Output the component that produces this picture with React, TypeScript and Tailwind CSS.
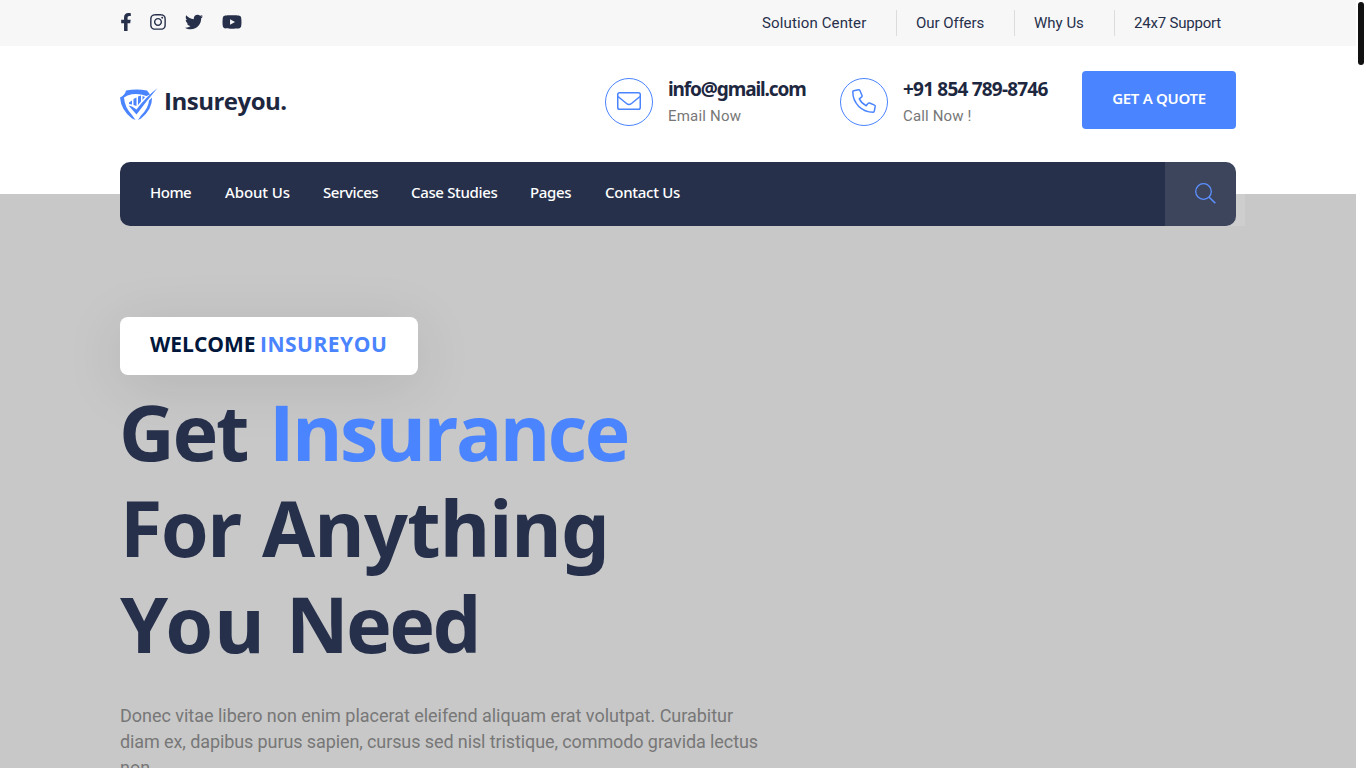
import { FaFacebookF, FaInstagram, FaTwitter, FaYoutube } from "react-icons/fa";

const topLinks = [
  { label: "Solution Center", className: "w-[134px] tracking-[0.13px]" },
  { label: "Our Offers", className: "w-[118px] tracking-[-0.05px]" },
  { label: "Why Us", className: "w-[100px]" },
  { label: "24x7 Support", className: "w-[107px] tracking-[-0.2px]" },
];

const navLinks = [
  { label: "Home", className: "w-[75px] tracking-[-0.5px]" },
  { label: "About Us", className: "w-[98px] tracking-[-0.1px]" },
  { label: "Services", className: "w-[88px] tracking-[-0.4px]" },
  { label: "Case Studies", className: "w-[119px] tracking-[-0.35px]" },
  { label: "Pages", className: "w-[75px] tracking-[-0.35px]" },
  { label: "Contact Us", className: "tracking-[-0.27px]" },
];

function Logo() {
  return (
    <div className="flex h-[34px] w-[170px] items-center">
      <svg viewBox="0 0 38 34" className="h-[34px] w-[38px] shrink-0" fill="#4a84ff">
        <path d="M6 2.500Q16.500.500 27 2.500L30 6.500L26.500 8Q16.500 4.500 7.500 7.500L4 9.500Q4.500 19 12 27L15.500 32L12 30.500Q1 22 0 9.500Q5 7 6 2.500Z" />
        <path d="M37.500 0Q26.500 13 16.500 26.500L8.500 17.500L12 18.500L16.500 21.500Q25 10 37.500 0Z" />
        <path d="M32 9.500Q32.500 21 21 30.500L18 32L21 27.500Q28.500 20 29 12.500Z" />
        <path d="M9 14.500L12 12.500V16.500L9 16ZM13.500 11L16.500 9.500V18L13.500 17ZM18 8.500L21 7.500V13.500L18 17ZM22.500 8L25 9L22.500 12Z" />
      </svg>
      <span className="mb-[8px] ml-[6px] whitespace-nowrap font-['Open_Sans'] text-[24px] font-bold leading-none tracking-[-0.5px] text-[#1d2740]">
        Insureyou.
      </span>
    </div>
  );
}

function MailIcon() {
  return (
    <svg viewBox="0 0 24 18" className="mb-[2px] h-[18px] w-6" fill="none" stroke="#4a84ff" strokeWidth="1.5">
      <rect x=".75" y=".75" width="22.500" height="16.500" rx="1.800" />
      <path d="M1 4.500L9.500 11.500Q12 13.500 14.500 11.500L23 4.500" />
    </svg>
  );
}

function PhoneIcon() {
  return (
    <svg
      viewBox="0 0 24 24"
      className="mb-[2px] size-6"
      fill="none"
      stroke="#4a84ff"
      strokeWidth="1.5"
      strokeLinejoin="round"
    >
      <path d="M1.700 1.700L6.600.8Q7.500.7 7.900 1.500L10 6.500Q10.300 7.300 9.700 7.900L7.300 9.900Q9.700 14.600 14.200 16.700L16.200 14.300Q16.800 13.700 17.600 14L22.500 16.100Q23.300 16.500 23.200 17.400L22.300 22.200Q22.100 23.200 21.200 23.200C9.500 23.200.8 14 .8 2.800Q.8 1.900 1.700 1.700Z" />
    </svg>
  );
}

function SearchIcon() {
  return (
    <svg viewBox="0 0 21 21" className="size-[21px]" fill="none" stroke="#4a84ff" strokeWidth="1.300">
      <circle cx="8.500" cy="8.500" r="7.800" />
      <path d="M14 14L20.300 20.300" strokeWidth="1.600" />
    </svg>
  );
}

export default function App() {
  return (
    <div className="relative flex h-[768px] w-[1366px] overflow-hidden bg-white font-[Roboto,sans-serif]">
      <div className="w-[1356px] shrink-0">
        {/* Top bar */}
        <div className="flex h-[46px] justify-between bg-[#f7f7f7] pl-[120px] pr-[135px] text-[#27304b]">
          <div className="flex items-center pb-[2px]">
            <FaFacebookF className="mr-[18px] h-[18px] w-3" />
            <FaInstagram className="mr-[18px] size-[18px] -ml-px" />
            <FaTwitter className="mr-[19px] size-[18px]" />
            <FaYoutube className="h-[18px] w-5" />
          </div>
          <ul className="flex items-center text-[15px]">
            {topLinks.map((link, i) => (
              <li key={link.label} className={`flex shrink-0 items-center whitespace-nowrap ${link.className}`}>
                {i > 0 && <span className="mr-[19px] h-[26px] w-px shrink-0 bg-[#dcdcdc]" />}
                {link.label}
              </li>
            ))}
          </ul>
        </div>

        {/* Header */}
        <header className="flex h-[116px] items-start px-[120px] pt-[25px]">
          <div className="pt-[17px]">
            <Logo />
          </div>
          <div className="ml-auto flex">
            <div className="mt-[7px] flex w-[235px]">
              <div className="mr-[15px] flex size-12 shrink-0 items-center justify-center rounded-full border border-[#4a84ff]">
                <MailIcon />
              </div>
              <div className="whitespace-nowrap">
                <p className="font-['Noto_Sans'] text-[19px] font-bold leading-[22px] tracking-[-1.1px] text-[#1d2740]">
                  info@gmail.com
                </p>
                <p className="mt-[5px] text-[15px] leading-[22px] tracking-[0.2px] text-[#777]">Email Now</p>
              </div>
            </div>
            <div className="mt-[7px] flex w-[242px]">
              <div className="mr-[15px] flex size-12 shrink-0 items-center justify-center rounded-full border border-[#4a84ff]">
                <PhoneIcon />
              </div>
              <div className="whitespace-nowrap">
                <p className="font-['Noto_Sans'] text-[19px] font-bold leading-[22px] tracking-[-0.8px] text-[#1d2740]">
                  +91 854 789-8746
                </p>
                <p className="mt-[5px] text-[15px] leading-[22px] tracking-[0.15px] text-[#777]">Call Now !</p>
              </div>
            </div>
            <button className="flex h-[58px] w-[154px] items-center justify-center whitespace-nowrap rounded bg-[#4a84ff] pb-[3px] font-['Noto_Sans'] text-[15px] font-semibold tracking-[-0.3px] text-white">
              GET A QUOTE
            </button>
          </div>
        </header>

        {/* Nav overlaps the hero */}
        <nav className="relative z-10 mx-[120px] flex h-16 items-center justify-between rounded-[10px] bg-[#27304b] pl-[30px]">
          <ul className="mb-[4px] flex whitespace-nowrap font-['Noto_Sans'] text-[15px] font-medium leading-[22px] text-white">
            {navLinks.map((link) => (
              <li key={link.label} className={link.className}>
                {link.label}
              </li>
            ))}
          </ul>
          <div className="absolute right-[-9px] top-0 h-16 w-20 bg-white/10" />
          <div className="mb-px mr-[20px]">
            <SearchIcon />
          </div>
        </nav>

        {/* Hero */}
        <section className="-mt-8 h-[574px] bg-[#c8c8c8] px-[120px] pt-[123px]">
          <div className="flex h-[58px] w-[298px] items-center whitespace-nowrap rounded-lg bg-white pb-[2px] pl-[30px] font-['Open_Sans'] text-[21px] font-bold text-[#00173c] shadow-[0_10px_60px_rgba(0,0,0,0.1)]">
            <span className="w-[110px]">WELCOME</span>
            <span className="tracking-[0.5px] text-[#4a84ff]">INSUREYOU</span>
          </div>
          <h1 className="mt-[9px] whitespace-nowrap font-['Noto_Sans'] text-[77px] font-bold leading-[96px] text-[#27304b]">
            <span className="flex">
              <span className="-ml-px w-[150px] tracking-[-2.3px]">Get</span>
              <span className="font-['Open_Sans'] tracking-[-2.6px] text-[#4a84ff]">Insurance</span>
            </span>
            <span className="flex">
              <span className="w-[142px] tracking-[-1.5px]">For</span>
              <span className="tracking-[-0.7px]">Anything</span>
            </span>
            <span className="flex">
              <span className="w-[166px] tracking-[1px]">You</span>
              <span className="tracking-[-2.7px]">Need</span>
            </span>
          </h1>
          <p className="mt-[31px] whitespace-nowrap text-[18px] leading-[26px] text-[#777]">
            <span className="block tracking-[-0.025px]">
              Donec vitae libero non enim placerat eleifend aliquam erat volutpat. Curabitur
            </span>
            <span className="block tracking-[-0.1px]">
              diam ex, dapibus purus sapien, cursus sed nisl tristique, commodo gravida lectus
            </span>
            <span className="block">non.</span>
          </p>
        </section>
      </div>

      {/* Scrollbar */}
      <div className="ml-[2px] mt-[2px] h-[63px] w-[6px] rounded-[3px] bg-[#111]" />
    </div>
  );
}
